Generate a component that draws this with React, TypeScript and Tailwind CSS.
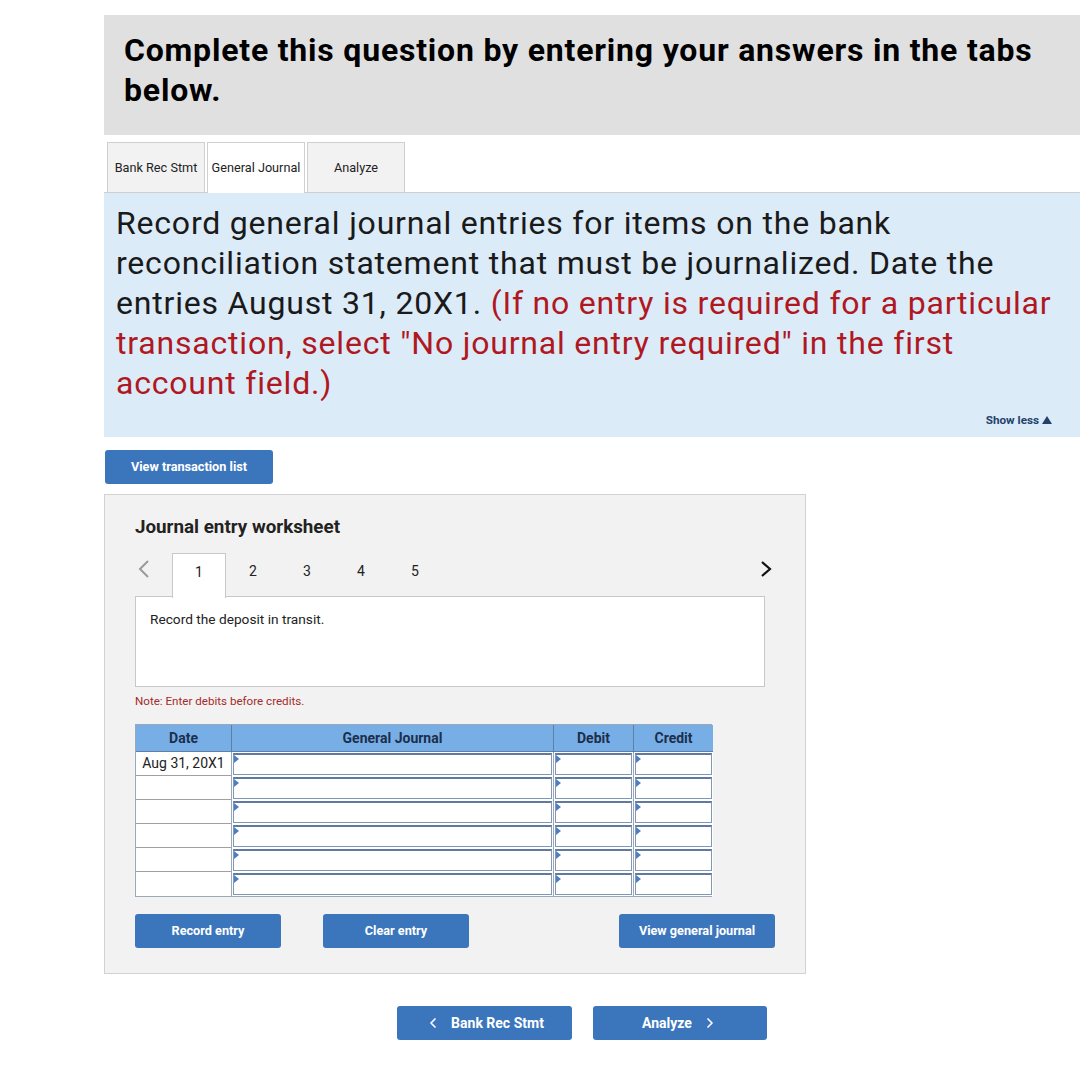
import { ChevronLeft, ChevronRight } from 'lucide-react';

const tabs = ['Bank Rec Stmt', 'General Journal', 'Analyze'];
const rows = ['Aug 31, 20X1', '', '', '', '', ''];

function Marker() {
  return (
    <span className="absolute left-0 top-0 h-0 w-0 border-y-[4px] border-y-transparent border-l-[5px] border-l-[#4b7fbf]" />
  );
}

function InputCell() {
  return (
    <div className="h-full border-l border-[#9aa8b8] bg-white p-[1px]">
      <div className="relative h-full border border-[#7f98b6] border-t-2 border-t-[#5f7a9c] bg-white">
        <Marker />
      </div>
    </div>
  );
}

function Btn({ children, className = '' }: { children: React.ReactNode; className?: string }) {
  return (
    <button
      className={`flex h-[34px] items-center justify-center rounded-[3px] bg-[#3b76bd] text-[12.7px] font-bold text-white ${className}`}
    >
      {children}
    </button>
  );
}

export default function App() {
  return (
    <div className="min-h-screen bg-white font-['Roboto',sans-serif] text-[#222]">
      <div className="pl-[104px] pt-[15px] pb-[33px]">
        {/* header */}
        <div className="h-[120px] bg-[#e0e0e0] px-[20px] pt-[15px]">
          <h1 className="text-[32px] font-bold leading-[40px] tracking-[0.8px] text-black">
            Complete this question by entering your answers in the tabs below.
          </h1>
        </div>

        {/* tabs */}
        <div className="mt-[7px] flex h-[51px] border-b border-[#cfcfcf] pl-[3px]">
          {tabs.map((t, i) => (
            <div
              key={t}
              className={`mr-[2px] flex w-[98px] items-center justify-center border border-b-0 border-[#cfcfcf] text-[12.7px] ${
                i === 1 ? '-mb-px bg-white' : 'bg-[#f2f2f2]'
              }`}
            >
              {t}
            </div>
          ))}
        </div>

        {/* instructions */}
        <div className="bg-[#dcebf8] pl-[12px] pr-[10px] pt-[10px] pb-[10px]">
          <p className="text-[32px] leading-[40px] tracking-[0.8px] text-[#1a1a1a]">
            Record general journal entries for items on the bank reconciliation statement that must be journalized. Date the
            entries August 31, 20X1.{' '}
            <span className="text-[#b0181f]">
              (If no entry is required for a particular transaction, select "No journal entry required" in the first account
              field.)
            </span>
          </p>
          <div className="mt-[10px] flex items-center justify-end pr-[18px] text-[11.7px] font-bold leading-[14px] text-[#23416b]">
            Show less
            <svg width="10" height="8" viewBox="0 0 10 8" className="ml-[3px]">
              <polygon points="5,0 10,8 0,8" fill="#23416b" />
            </svg>
          </div>
        </div>

        <Btn className="mt-[13px] ml-px w-[168px]">View transaction list</Btn>

        {/* worksheet */}
        <div className="mt-[10px] h-[480px] w-[702px] border border-[#d2d2d2] bg-[#f2f2f2] pl-[30px] pt-[22px]">
          <h2 className="text-[18.8px] font-bold leading-[20px] text-[#222]">Journal entry worksheet</h2>

          <div className="mt-[16px] flex h-[44px] w-[640px] items-start">
            <div className="w-[37px] pl-[3px] pt-[6px]">
              <svg width="12" height="20" viewBox="0 0 12 20">
                <polyline points="10,2 2,10 10,18" fill="none" stroke="#9a9a9a" strokeWidth="2" />
              </svg>
            </div>
            {[1, 2, 3, 4, 5].map((n) => (
              <div
                key={n}
                className={`relative z-10 flex h-[45px] w-[54px] justify-center pt-[8px] text-[14px] ${
                  n === 1 ? 'border border-b-0 border-[#c8c8c8] bg-white' : ''
                }`}
              >
                {n}
              </div>
            ))}
            <div className="ml-auto pr-[3px] pt-[7px]">
              <svg width="12" height="18" viewBox="0 0 12 18">
                <polyline points="2,2 10,9 2,16" fill="none" stroke="#111" strokeWidth="2.2" />
              </svg>
            </div>
          </div>

          <div className="-mt-px h-[91px] w-[630px] border border-[#c8c8c8] bg-white pl-[14px] pt-[13px] text-[13.7px] leading-[18px]">
            Record the deposit in transit.
          </div>

          <div className="mt-[7px] text-[11.6px] leading-[14px] text-[#a52a2a]">Note: Enter debits before credits.</div>

          {/* table */}
          <div className="mt-[16px] grid w-[577px] grid-cols-[95px_322px_80px_80px] border border-[#9aa8b8]">
            {['Date', 'General Journal', 'Debit', 'Credit'].map((h, i) => (
              <div
                key={h}
                className={`flex h-[27px] items-center justify-center border-b border-[#5f7fa8] bg-[#78aee6] text-[14px] font-bold text-[#1b2f4d] ${
                  i > 0 ? 'border-l border-l-[#5f7fa8]' : ''
                }`}
              >
                {h}
              </div>
            ))}
            {rows.map((d, r) => (
              <div key={r} className="contents">
                <div
                  className={`flex h-[24px] items-center justify-center bg-white text-[14px] ${
                    r < rows.length - 1 ? 'border-b border-[#a0a0a0]' : ''
                  }`}
                >
                  {d}
                </div>
                <InputCell />
                <InputCell />
                <InputCell />
              </div>
            ))}
          </div>

          <div className="mt-[17px] flex w-[640px]">
            <Btn className="w-[146px]">Record entry</Btn>
            <Btn className="ml-[42px] w-[146px]">Clear entry</Btn>
            <Btn className="ml-auto w-[156px]">View general journal</Btn>
          </div>
        </div>

        {/* bottom nav */}
        <div className="mt-[32px] flex pl-[293px]">
          <Btn className="w-[175px] gap-[10px] text-[14px]">
            <ChevronLeft size={16} strokeWidth={2.5} /> Bank Rec Stmt
          </Btn>
          <Btn className="ml-[21px] w-[174px] gap-[10px] text-[14px]">
            Analyze <ChevronRight size={16} strokeWidth={2.5} />
          </Btn>
        </div>
      </div>
    </div>
  );
}
